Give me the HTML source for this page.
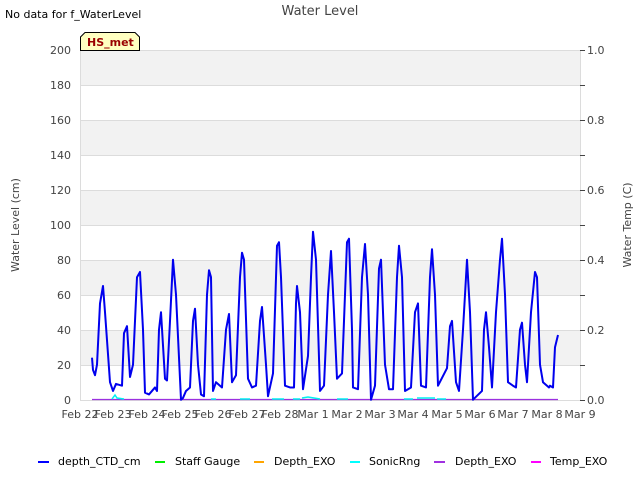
<!DOCTYPE html>
<html><head><style>
body{margin:0;width:640px;height:480px;background:#fff;overflow:hidden;font-family:"Liberation Sans","DejaVu Sans",sans-serif;}
</style></head><body>
<svg width="640" height="480" xmlns="http://www.w3.org/2000/svg" font-family="DejaVu Sans, Liberation Sans, sans-serif">
<rect width="640" height="480" fill="#fff"/>
<g fill="#f2f2f2">
<rect x="80" y="50" width="500" height="35"/>
<rect x="80" y="120" width="500" height="35"/>
<rect x="80" y="190" width="500" height="35"/>
<rect x="80" y="260" width="500" height="35"/>
<rect x="80" y="330" width="500" height="35"/>
</g>
<g stroke="#dcdcdc" stroke-width="1">
<line x1="80" x2="580" y1="50.5" y2="50.5"/><line x1="80" x2="580" y1="85.5" y2="85.5"/>
<line x1="80" x2="580" y1="120.5" y2="120.5"/><line x1="80" x2="580" y1="155.5" y2="155.5"/>
<line x1="80" x2="580" y1="190.5" y2="190.5"/><line x1="80" x2="580" y1="225.5" y2="225.5"/>
<line x1="80" x2="580" y1="260.5" y2="260.5"/><line x1="80" x2="580" y1="295.5" y2="295.5"/>
<line x1="80" x2="580" y1="330.5" y2="330.5"/><line x1="80" x2="580" y1="365.5" y2="365.5"/>
<line x1="80.5" x2="80.5" y1="50" y2="400"/><line x1="580.5" x2="580.5" y1="50" y2="400"/>
<line x1="80" x2="580" y1="400.5" y2="400.5"/>
</g>
<g font-size="11" fill="#444" text-anchor="end">
<text x="71" y="54">200</text><text x="71" y="89">180</text><text x="71" y="124">160</text>
<text x="71" y="159">140</text><text x="71" y="194">120</text><text x="71" y="229">100</text>
<text x="71" y="264">80</text><text x="71" y="299">60</text><text x="71" y="334">40</text>
<text x="71" y="369">20</text><text x="71" y="404">0</text>
</g>
<g stroke="#444" stroke-width="1">
<line x1="580" x2="585" y1="50.5" y2="50.5"/><line x1="580" x2="585" y1="85.5" y2="85.5"/>
<line x1="580" x2="585" y1="120.5" y2="120.5"/><line x1="580" x2="585" y1="155.5" y2="155.5"/>
<line x1="580" x2="585" y1="190.5" y2="190.5"/><line x1="580" x2="585" y1="225.5" y2="225.5"/>
<line x1="580" x2="585" y1="260.5" y2="260.5"/><line x1="580" x2="585" y1="295.5" y2="295.5"/>
<line x1="580" x2="585" y1="330.5" y2="330.5"/><line x1="580" x2="585" y1="365.5" y2="365.5"/>
<line x1="580" x2="585" y1="400.5" y2="400.5"/>
</g>
<g font-size="11" fill="#444">
<text x="587" y="54">1.0</text><text x="587" y="124">0.8</text><text x="587" y="194">0.6</text>
<text x="587" y="264">0.4</text><text x="587" y="334">0.2</text><text x="587" y="404">0.0</text>
</g>
<g font-size="11" fill="#444" text-anchor="middle">
<text x="80" y="418">Feb 22</text><text x="113" y="418">Feb 23</text><text x="147" y="418">Feb 24</text>
<text x="180" y="418">Feb 25</text><text x="213" y="418">Feb 26</text><text x="247" y="418">Feb 27</text>
<text x="280" y="418">Feb 28</text><text x="313" y="418">Mar 1</text><text x="347" y="418">Mar 2</text>
<text x="380" y="418">Mar 3</text><text x="413" y="418">Mar 4</text><text x="447" y="418">Mar 5</text>
<text x="480" y="418">Mar 6</text><text x="513" y="418">Mar 7</text><text x="547" y="418">Mar 8</text>
<text x="580" y="418">Mar 9</text>
</g>
<text x="320" y="15" font-size="13" fill="#444" text-anchor="middle">Water Level</text>
<text x="5" y="18" font-size="11" fill="#000">No data for f_WaterLevel</text>
<text transform="translate(19,225) rotate(-90)" font-size="11" fill="#444" text-anchor="middle">Water Level (cm)</text>
<text transform="translate(631,225) rotate(-90)" font-size="11" fill="#444" text-anchor="middle">Water Temp (C)</text>
<path d="M80.5,50.5 V37 L85,32.5 H135 L139.5,37 V50.5 Z" fill="#ffffc0" stroke="#000" stroke-width="1"/>
<text x="87" y="46" font-size="11" font-weight="bold" fill="#990000">HS_met</text>
<line x1="92" x2="558" y1="399.5" y2="399.5" stroke="#9b30e0" stroke-width="1.2"/>
<g stroke="#00f0f0" stroke-width="1.5" fill="none">
<polyline points="112,399 115,395 117,398 124,399"/>
<path d="M211,399 H216 M240,399 H250 M272,399 H284 M293,399 H300 M302,398 L308,397 L314,398 L320,399 M337,399 H348 M404,399 H413 M417,398 H435 M437,399 H446"/>
</g>
<g transform="translate(0,399.7) scale(1,-1.75)">
<polyline fill="none" stroke="#0000ee" stroke-width="2" vector-effect="non-scaling-stroke" stroke-linejoin="round" points="92,24 93,17 95,14 97,20 100,55 103,65 105,50 110,10 113,5 116,9 122,8 124,38 127,42 130,13 133,20 137,70 140,73 143,40 145,4 149,3 155,7 157,5 159,40 161,50 165,12 167,11 170,45 173,80 176,60 181,0 183,1 186,5 190,7 193,45 195,52 198,20 201,3 204,2 207,60 209,74 211,70 213,5 216,10 222,7 226,40 229,49 232,10 236,14 240,70 242,84 244,80 248,12 252,7 256,8 260,45 262,53 266,20 268,2 273,15 277,88 279,90 281,70 285,8 290,7 294,7 296,55 297,65 300,50 303,6 308,25 311,70 313,96 316,80 320,5 324,8 328,60 331,85 334,50 337,12 342,15 347,90 349,92 352,40 353,7 358,6 362,70 365,89 368,60 371,0 375,8 379,75 381,80 385,20 389,6 393,6 397,70 399,88 402,70 405,5 411,7 415,50 418,55 421,8 426,7 430,70 432,86 435,60 438,8 447,18 450,42 452,45 456,10 459,5 463,40 467,80 470,50 473,0 482,5 484,40 486,50 489,30 492,7 496,50 500,80 502,92 505,60 508,10 513,8 516,7 520,40 522,44 525,20 527,10 531,50 535,73 537,70 540,20 543,10 549,7 550,8 553,7 555,30 558,37"/>
</g>
<g font-size="11" fill="#000">
<line x1="38" x2="49" y1="462" y2="462" stroke="#0000ff" stroke-width="2"/><text x="58" y="465">depth_CTD_cm</text>
<line x1="155" x2="165" y1="462" y2="462" stroke="#00ee00" stroke-width="2"/><text x="175" y="465">Staff Gauge</text>
<line x1="254" x2="264" y1="462" y2="462" stroke="#ffa500" stroke-width="2"/><text x="274" y="465">Depth_EXO</text>
<line x1="350" x2="360" y1="462" y2="462" stroke="#00ffff" stroke-width="2"/><text x="369" y="465">SonicRng</text>
<line x1="434" x2="445" y1="462" y2="462" stroke="#a030e0" stroke-width="2"/><text x="455" y="465">Depth_EXO</text>
<line x1="531" x2="541" y1="462" y2="462" stroke="#ff00ff" stroke-width="2"/><text x="550" y="465">Temp_EXO</text>
</g>
</svg>
</body></html>
